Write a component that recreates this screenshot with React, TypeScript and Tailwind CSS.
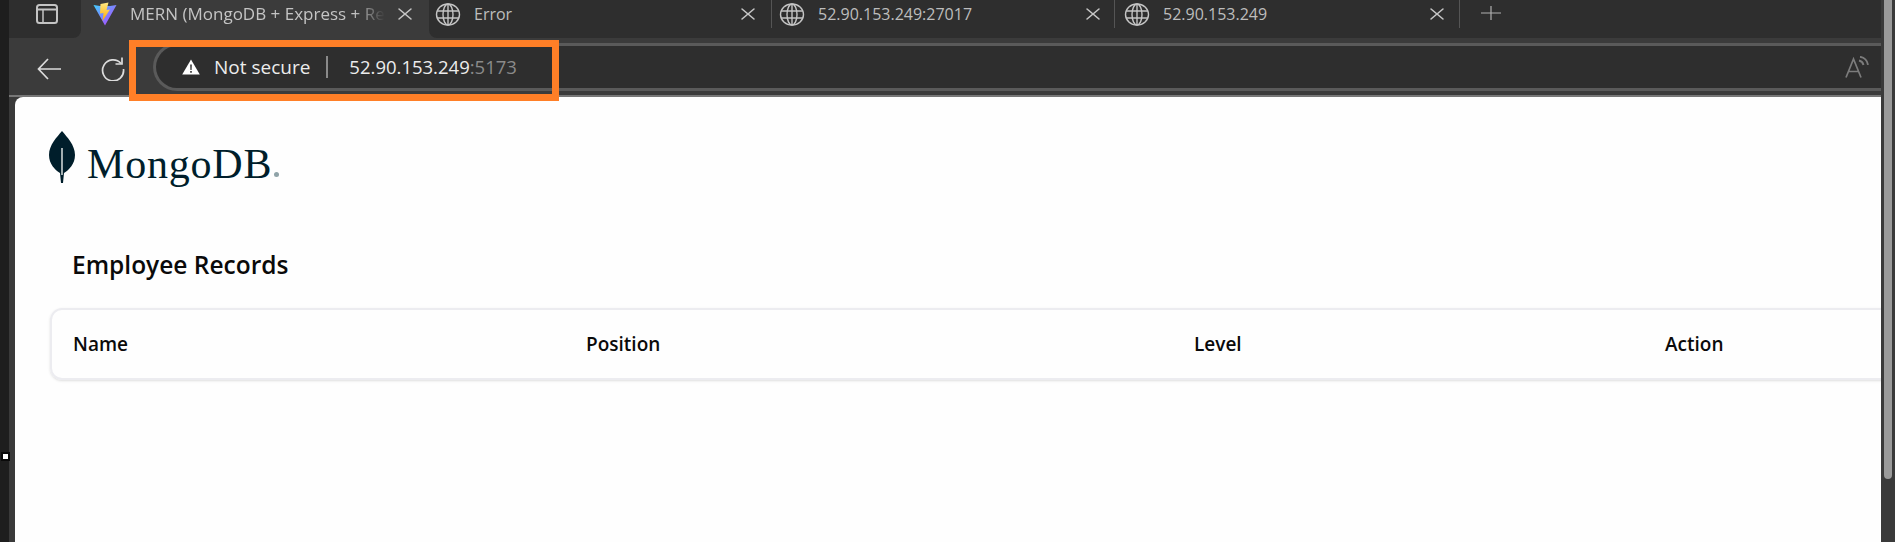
import React from 'react';
import { X } from 'lucide-react';

const GlobeIcon = () => (
  <svg viewBox="0 0 26 23" className="w-[26px] h-[23px] shrink-0" fill="none" stroke="#c4c4c4" strokeWidth="1.4">
    <ellipse cx="13" cy="11.5" rx="11.5" ry="10.5" />
    <ellipse cx="13" cy="11.5" rx="5" ry="10.5" />
    <path d="M2 8h22M2 15h22M13 1v21" />
  </svg>
);

const ViteLogo = () => (
  <svg viewBox="0 0 24 24" className="w-[24px] h-[24px] shrink-0">
    <defs>
      <linearGradient id="viteBase" x1="0" y1="0" x2="1" y2="1">
        <stop offset="0" stopColor="#41d1ff" />
        <stop offset="1" stopColor="#bd34fe" />
      </linearGradient>
      <linearGradient id="viteBolt" x1="0" y1="0" x2="0" y2="1">
        <stop offset="0" stopColor="#ffea83" />
        <stop offset="1" stopColor="#ffa800" />
      </linearGradient>
    </defs>
    <path d="M0.5 3 L12 23.5 L23.5 3 L17 4 L7 4 Z" fill="url(#viteBase)" />
    <path d="M15.5 0.5 L7.5 2 L7 11.5 L10.5 11 L9.5 19 L17 7.5 L13.5 8 Z" fill="url(#viteBolt)" />
  </svg>
);

const WindowIcon = () => (
  <svg viewBox="0 0 22 20" className="w-[22px] h-[20px]" fill="none" stroke="#c4c4c4" strokeWidth="2">
    <rect x="1" y="1" width="20" height="18" rx="2.5" />
    <path d="M1 5.5h20" />
    <path d="M7 5.5V19" strokeWidth="1.5" />
  </svg>
);

const BackIcon = () => (
  <svg viewBox="0 0 24 22" className="w-[24px] h-[22px] shrink-0" fill="none" stroke="#dcdcdc" strokeWidth="1.7">
    <path d="M24 11H1.5M11 1 1.5 11 11 21" />
  </svg>
);

const ReloadIcon = () => (
  <svg viewBox="0 0 24 24" className="w-[24px] h-[24px] shrink-0" fill="none" stroke="#dcdcdc" strokeWidth="1.7">
    <path d="M20 6.5A10.5 10.5 0 1 0 22.5 12" />
    <path d="M21 0.5V7h-6.5" />
  </svg>
);

const WarningIcon = () => (
  <svg viewBox="0 0 18 16" className="w-[18px] h-[16px] shrink-0">
    <path d="M9 0.5 17.8 15.5H0.2Z" fill="#ffffff" />
    <path d="M8.2 5.5h1.6l-.2 5.5H8.4Z M8.2 12h1.6v1.7H8.2Z" fill="#2e2e2e" />
  </svg>
);

const ReadAloudIcon = () => (
  <svg viewBox="0 0 24 22" className="w-[24px] h-[22px]" fill="none" stroke="#7c7c7c" strokeWidth="1.7">
    <path d="M1 21.5 8.5 3 16 21.5M3.5 15.5h10" />
    <path d="M14 4.5a6 6 0 0 1 4.5 4.5M15 0.8a9.5 9.5 0 0 1 8 8" strokeWidth="1.9" />
  </svg>
);

const NewTabIcon = () => (
  <svg viewBox="0 0 20 14" className="w-[20px] h-[14px]" fill="none" stroke="#b0b0b0" strokeWidth="1.2">
    <path d="M0 7h20M10 0v14" />
  </svg>
);

const MongoLeaf = () => (
  <svg viewBox="0 0 26 52" className="w-[26px] h-[52px] shrink-0">
    <path d="M13 0C18 6 26 14 26 24C26 33 20 39 15 42L14 52H12L11 42C6 39 0 33 0 24C0 14 8 6 13 0Z" fill="#001e2b" />
    <path d="M13 17V44" stroke="#e8edeb" strokeWidth="1.4" />
  </svg>
);

const CloseIcon = () => (
  <X className="ml-auto w-[24px] h-[20px] shrink-0 text-[#c4c4c4]" strokeWidth={1.5} preserveAspectRatio="none" />
);

interface TabProps {
  title: string;
  className: string;
}

const Tab: React.FC<TabProps> = ({ title, className }) => (
  <div className={`h-[28px] flex items-center border-r border-[#555555] ${className}`}>
    <GlobeIcon />
    <span className="ml-[13px] text-[16px] text-[#bdbdbd] whitespace-nowrap">{title}</span>
    <CloseIcon />
  </div>
);

export default function App() {
  return (
    <div className="relative flex w-[1895px] h-[542px] overflow-hidden bg-[#3a3a3a] font-['Open_Sans',sans-serif]">
      <div className="w-[9px] shrink-0 bg-[#1e1e1e]" />

      <div className="flex-1 min-w-0 flex flex-col">
        {/* tab strip */}
        <div className="h-[38px] shrink-0 flex bg-[#3b3b3b]">
          <div className="w-[72px] flex justify-center pt-[4px] pl-[3px] bg-[#2e2e2e] rounded-br-lg">
            <WindowIcon />
          </div>
          <div className="w-[348px] flex items-center pl-[12px] pr-[12px] pb-[10px]">
            <ViteLogo />
            <span className="ml-[13px] w-[255px] overflow-hidden whitespace-nowrap text-[17px] text-[#c4c4c4] [mask-image:linear-gradient(to_right,black_88%,transparent)]">
              MERN (MongoDB + Express + Re
            </span>
            <CloseIcon />
          </div>
          <div className="flex-1 flex bg-[#2e2e2e] rounded-bl-lg">
            <Tab title="Error" className="w-[343px] pl-[6px] pr-[11px]" />
            <Tab title="52.90.153.249:27017" className="w-[343px] pl-[7px] pr-[9px]" />
            <Tab title="52.90.153.249" className="w-[345px] pl-[9px] pr-[10px]" />
            <div className="pl-[21px] pt-[6px]">
              <NewTabIcon />
            </div>
          </div>
        </div>

        {/* toolbar */}
        <div className="h-[59px] shrink-0 flex bg-[#3b3b3b] pt-[5px] pb-[4px] border-b-2 border-[#777777]">
          <div className="w-[144px] flex items-center pl-[28px] gap-[40px] shrink-0 pt-[3px]">
            <BackIcon />
            <ReloadIcon />
          </div>
          <div className="flex-1 h-[48px] flex items-center pl-[26px] pr-[12px] bg-[#2e2e2e] border-y-[3px] border-l-[3px] border-[#5a5a5a] rounded-l-[24px]">
            <WarningIcon />
            <span className="ml-[14px] text-[19px] text-[#ececec] whitespace-nowrap">Not secure</span>
            <span className="ml-[16px] w-[2px] h-[22px] bg-[#8a8a8a]" />
            <span className="ml-[21px] text-[18.5px] text-[#ececec]">
              52.90.153.249<span className="text-[#8a8a8a]">:5173</span>
            </span>
            <span className="ml-auto">
              <ReadAloudIcon />
            </span>
          </div>
        </div>

        {/* page */}
        <div className="flex-1 flex overflow-hidden">
          <div className="w-[6px] shrink-0" />
          <div className="flex-1 min-w-0 overflow-hidden bg-[#fefefe] rounded-tl-lg">
            <div className="flex items-start pl-[34px] pt-[34px]">
              <MongoLeaf />
              <span className="ml-[12px] mt-[8px] text-[42px] leading-[50px] tracking-[0.8px] text-[#001e2b] font-['Liberation_Serif',serif]">
                MongoDB
              </span>
              <span className="ml-[2px] mt-[41px] w-[5px] h-[5px] rounded-full bg-[#8fa3a8]" />
            </div>
            <h3 className="ml-[57px] mt-[61px] text-[24.5px] leading-[30px] font-semibold text-[#0a0a0a]">Employee Records</h3>
            <div className="ml-[35px] -mr-[20px] mt-[28px] h-[72px] border-2 border-[#ececf0] rounded-[12px] shadow-sm grid grid-cols-[513px_608px_471px_1fr] items-center pl-[21px] text-[19px] font-semibold text-[#0a0a0a]">
              <span>Name</span>
              <span>Position</span>
              <span>Level</span>
              <span>Action</span>
            </div>
          </div>
        </div>
      </div>

      {/* scrollbar */}
      <div className="w-[14px] shrink-0 pl-[3px] pr-[3px]">
        <div className="h-[479px] bg-[#9a9a9a] rounded-b-sm" />
      </div>

      {/* left edge marker */}
      <div className="absolute left-[1px] top-[452px] w-[9px] h-[9px] bg-white border-2 border-[#0a0a0a]" />

      {/* annotation box */}
      <div className="absolute left-[129px] top-[40px] w-[430px] h-[61px] border-[7px] border-[#ff7f27]" />
    </div>
  );
}
